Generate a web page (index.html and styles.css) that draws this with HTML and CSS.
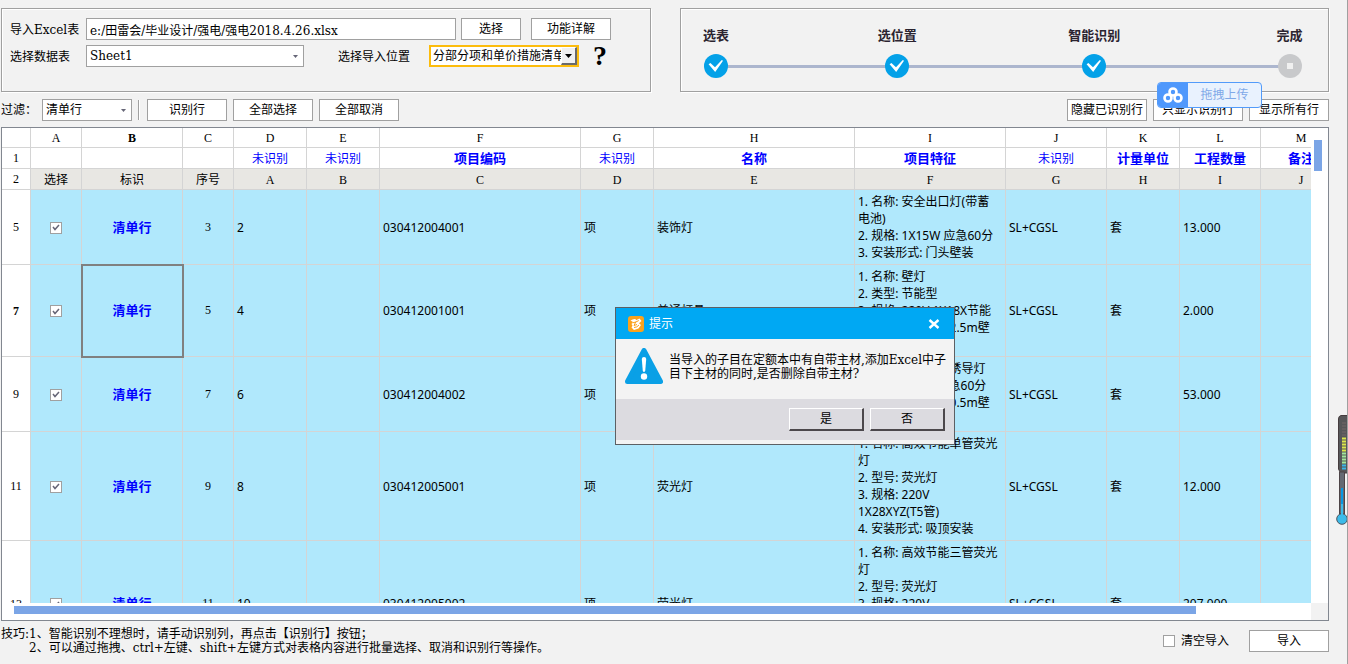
FILE: index.html
```html
<!DOCTYPE html>
<html lang="zh-CN">
<head>
<meta charset="utf-8">
<title>导入Excel表</title>
<link rel="stylesheet" href="styles.css">
</head>
<body>
<main class="window">
  <section class="top">
    <form class="panel source">
      <div class="line">
        <label class="lead" for="file">导入Excel表</label>
        <input class="field file" id="file" type="text" value="e:/田雷会/毕业设计/强电/强电2018.4.26.xlsx">
        <button class="btn small" type="button">选择</button>
        <button class="btn detail" type="button">功能详解</button>
      </div>
      <div class="line">
        <label class="lead" for="sheet">选择数据表</label>
        <select class="field drop sheet" id="sheet"><option>Sheet1</option></select>
        <label class="place-label" for="place">选择导入位置</label>
        <div class="place-box">
          <select class="place" id="place"><option>分部分项和单价措施清单</option></select>
          <span class="place-arrow"><svg width="7" height="4" viewBox="0 0 7 4"><path d="M0 0h7L3.5 4z"/></svg></span>
        </div>
        <button class="help" type="button">?</button>
      </div>
    </form>
    <div class="panel steps">
      <ol class="step-list">
        <li class="step"><span class="step-name">选表</span><svg class="dot" viewBox="0 0 24 24"><circle cx="12" cy="12" r="12" fill="#04a1e8"/><path d="M4.600 10.200L6.400 9l4.600 4.200 6.800-7.200 1.200.8L11.200 18z" fill="#fff"/></svg></li>
        <li class="step"><span class="step-name">选位置</span><svg class="dot" viewBox="0 0 24 24"><circle cx="12" cy="12" r="12" fill="#04a1e8"/><path d="M4.600 10.200L6.400 9l4.600 4.200 6.800-7.200 1.200.8L11.200 18z" fill="#fff"/></svg></li>
        <li class="step"><span class="step-name">智能识别</span><svg class="dot" viewBox="0 0 24 24"><circle cx="12" cy="12" r="12" fill="#04a1e8"/><path d="M4.600 10.200L6.400 9l4.600 4.200 6.800-7.200 1.200.8L11.200 18z" fill="#fff"/></svg></li>
        <li class="step"><span class="step-name">完成</span><svg class="dot" viewBox="0 0 24 24"><circle cx="12" cy="12" r="12" fill="#c8c9cb"/><path d="M9 9h6v6H9z" fill="#f0f0f0"/></svg></li>
      </ol>
    </div>
  </section>

  <section class="filters">
    <label class="filter-label" for="filter">过滤：</label>
    <select class="field drop filter" id="filter"><option>清单行</option></select>
    <span class="divider"></span>
    <button class="btn" type="button">识别行</button>
    <button class="btn" type="button">全部选择</button>
    <button class="btn" type="button">全部取消</button>
    <span class="spacer"></span>
    <button class="btn" type="button">隐藏已识别行</button>
    <button class="btn only" type="button">只显示识别行</button>
    <button class="btn" type="button">显示所有行</button>
    <button class="upload" type="button">
      <span class="upload-icon"><svg width="20" height="16" viewBox="0 0 20 16" fill="none" stroke="#fff" stroke-width="2.6"><circle cx="10" cy="5" r="3.5"/><circle cx="5" cy="11" r="3.5"/><circle cx="15" cy="11" r="3.5"/></svg></span>
      <span class="upload-text">拖拽上传</span>
    </button>
  </section>

  <section class="sheet-frame">
    <div class="sheet-view">
      <table class="grid">
        <colgroup><col class="w-head"><col class="w-check"><col class="w-mark"><col class="w-check"><col class="w-s"><col class="w-s"><col class="w-l"><col class="w-s"><col class="w-l"><col class="w-m"><col class="w-mark"><col class="w-s"><col class="w-n"><col class="w-n"></colgroup>
        <thead>
          <tr class="letters"><th></th><th>A</th><th class="current">B</th><th>C</th><th>D</th><th>E</th><th>F</th><th>G</th><th>H</th><th>I</th><th>J</th><th>K</th><th>L</th><th>M</th></tr>
          <tr class="fields"><th class="num">1</th><td></td><td></td><td></td><td>未识别</td><td>未识别</td><td class="known">项目编码</td><td>未识别</td><td class="known">名称</td><td class="known">项目特征</td><td>未识别</td><td class="known">计量单位</td><td class="known">工程数量</td><td class="known">备注</td></tr>
          <tr class="names"><th class="num">2</th><td>选择</td><td>标识</td><td>序号</td><td>A</td><td>B</td><td>C</td><td>D</td><td>E</td><td>F</td><td>G</td><td>H</td><td>I</td><td>J</td></tr>
        </thead>
        <tbody>
          <tr><th class="num">5</th><td class="mid"><input class="tick" type="checkbox" aria-label="选择第5行" checked></td><td class="mark">清单行</td><td class="mid">3</td><td>2</td><td></td><td>030412004001</td><td>项</td><td>装饰灯</td><td class="feature">1. 名称: 安全出口灯(带蓄<br>电池)<br>2. 规格: 1X15W 应急60分<br>3. 安装形式: 门头壁装</td><td>SL+CGSL</td><td>套</td><td>13.000</td><td></td></tr>
          <tr><th class="num current">7</th><td class="mid"><input class="tick" type="checkbox" aria-label="选择第7行" checked></td><td class="mark selected">清单行</td><td class="mid">5</td><td>4</td><td></td><td>030412001001</td><td>项</td><td>普通灯具</td><td class="feature">1. 名称: 壁灯<br>2. 类型: 节能型<br>3. 规格: 220V 1X18X节能<br>4. 安装形式: 距地2.5m壁<br>装</td><td>SL+CGSL</td><td>套</td><td>2.000</td><td></td></tr>
          <tr><th class="num">9</th><td class="mid"><input class="tick" type="checkbox" aria-label="选择第9行" checked></td><td class="mark">清单行</td><td class="mid">7</td><td>6</td><td></td><td>030412004002</td><td>项</td><td>装饰灯</td><td class="feature">1. 名称: 单向疏散诱导灯<br>2. 规格: 1X8W 应急60分<br>3. 安装形式: 距地0.5m壁<br>装</td><td>SL+CGSL</td><td>套</td><td>53.000</td><td></td></tr>
          <tr><th class="num">11</th><td class="mid"><input class="tick" type="checkbox" aria-label="选择第11行" checked></td><td class="mark">清单行</td><td class="mid">9</td><td>8</td><td></td><td>030412005001</td><td>项</td><td>荧光灯</td><td class="feature">1. 名称: 高效节能单管荧光<br>灯<br>2. 型号: 荧光灯<br>3. 规格: 220V<br>1X28XYZ(T5管)<br>4. 安装形式: 吸顶安装</td><td>SL+CGSL</td><td>套</td><td>12.000</td><td></td></tr>
          <tr><th class="num">13</th><td class="mid"><input class="tick" type="checkbox" aria-label="选择第13行" checked></td><td class="mark">清单行</td><td class="mid">11</td><td>10</td><td></td><td>030412005002</td><td>项</td><td>荧光灯</td><td class="feature">1. 名称: 高效节能三管荧光<br>灯<br>2. 型号: 荧光灯<br>3. 规格: 220V<br>3X28XYZ(T5管)<br>4. 安装形式: 吸顶安装<br>&nbsp;</td><td>SL+CGSL</td><td>套</td><td>207.000</td><td></td></tr>
        </tbody>
      </table>
    </div>
    <div class="vbar"><div class="vthumb"></div></div>
    <div class="hbar"><div class="hthumb"></div></div>
    <div class="corner"></div>
  </section>

  <footer class="foot">
    <div class="tips">
      <span>技巧:</span>
      <ol class="tip-list">
        <li>1、智能识别不理想时，请手动识别列，再点击【识别行】按钮；</li>
        <li>2、可以通过拖拽、ctrl+左键、shift+左键方式对表格内容进行批量选择、取消和识别行等操作。</li>
      </ol>
    </div>
    <label class="clear"><input class="box" type="checkbox">清空导入</label>
    <button class="btn" type="button">导入</button>
  </footer>

  <section class="dialog" role="dialog" aria-labelledby="dlg-title">
    <header class="dialog-head">
      <svg class="app-icon" viewBox="0 0 16 16"><rect width="16" height="16" rx="3" fill="#fba21c"/><path d="M2.500 4.500Q5 2.500 7.500 3L8 4.200 11.500 2.500 13.500 5 11 7.200 13 9 10.500 12.500 6 14 3.500 11.500 4.500 9.500 3.500 8 5 6z" fill="#fff"/><path d="M4.500 6.800Q8 6.500 10.800 4.500M6 11.500Q9 11.500 11 9M8 5.500L6 9.500 9 8.500" stroke="#fba21c" fill="none"/></svg>
      <h2 class="dialog-title" id="dlg-title">提示</h2>
      <button class="close" type="button" aria-label="关闭"><svg width="12" height="10" viewBox="0 0 12 10"><path d="M1.500 1l9 8M10.500 1l-9 8" stroke="#fff" stroke-width="2.400"/></svg></button>
    </header>
    <div class="dialog-body">
      <svg class="warn" viewBox="0 0 38 36"><path d="M19 2.500L35.500 33.500h-33z" fill="#0aa0e6" stroke="#0aa0e6" stroke-width="5" stroke-linejoin="round"/><path d="M16.800 11q0-2 2.200-2t2.200 2l-1 12q-1.200 2-2.400 0z" fill="#fff"/><circle cx="19" cy="28.500" r="3.200" fill="#fff"/></svg>
      <p class="message">当导入的子目在定额本中有自带主材,添加Excel中子目下主材的同时,是否删除自带主材?</p>
    </div>
    <div class="dialog-actions">
      <button class="choice" type="button">是</button>
      <button class="choice" type="button">否</button>
    </div>
  </section>

  <svg class="gauge" viewBox="0 0 12 110"><path d="M12 .5H5Q2.500 1 2.500 4v50l2 4H12z" fill="#575759" stroke="#453c3e"/><path d="M6 8h4M6 11h4M6 14h4M6 17h4M6 20h4" stroke="#756969"/><path d="M6 23.500h4M6 26.500h4M6 29.500h4M6 32.500h4M6 35.500h4" stroke="#dce84b" stroke-width="2"/><path d="M6 38.500h4M6 41.500h4M6 44.500h4M6 47.500h4" stroke="#a2e99c" stroke-width="2"/><path d="M6 50.500h4M6 53.500h4" stroke="#3bb6ea" stroke-width="2"/><path d="M3.500 57h5v42h-5z" fill="#656a73" stroke="#4d4447"/><circle cx="6" cy="104" r="5.300" fill="#3cbbe9" stroke="#4d5560"/><path d="M6 73v16" stroke="#0798e4" stroke-width="2"/><path d="M6 89v14" stroke="#3cbbe9" stroke-width="2"/></svg>
</main>
</body>
</html>
```
FILE: styles.css
```css
* { box-sizing: border-box; }

body {
  margin: 0;
  background: #f2f2f2;
  color: #000;
  font: 12px/14px "DejaVu Serif", "Noto Sans CJK SC", sans-serif;
}

button, input, select {
  margin: 0;
  font: inherit;
  color: inherit;
}

.window {
  position: relative;
  display: flex;
  flex-direction: column;
  height: 100vh;
  padding: 8px 18px 9px 1px;
  border-right: 1px solid #a0a0a0;
  overflow: hidden;
}

.top {
  display: grid;
  grid-template-columns: 1fr 1fr;
  gap: 29px;
}

.panel {
  border: 1px solid #a0a0a0;
  box-shadow: 1px 1px 0 #fff, inset 1px 1px 0 #fff;
  height: 84px;
}

.source {
  padding: 9px 8px;
  display: flex;
  flex-direction: column;
  gap: 5px;
}

.steps { padding: 17px 25px 17px 22px; }

.line {
  display: flex;
  align-items: center;
  height: 22px;
}

.line label {
  padding-top: 1px;
  white-space: nowrap;
}

.lead { width: 76px; }

.field {
  height: 22px;
  border: 1px solid #a0a0a0;
  border-radius: 0;
  background: #fff;
  padding: 0 3px;
}

.file { width: 370px; margin-right: 5px; }

.drop {
  appearance: none;
  background: #fff url("data:image/svg+xml,%3Csvg xmlns='http://www.w3.org/2000/svg' width='5' height='3'%3E%3Cpath d='M0 0h5L2.500 3z' fill='%23667'/%3E%3C/svg%3E") no-repeat right 5px center;
}

.sheet { width: 218px; }

.btn {
  width: 80px;
  height: 22px;
  padding: 0;
  border: 1px solid #a0a0a0;
  background: #fff;
  white-space: nowrap;
}

.small { width: 60px; margin-right: 10px; }

.place-label { margin-left: 34px; width: 91px; }

.place-box {
  display: flex;
  width: 150px;
  height: 22px;
  border: 2px solid #fcbc0c;
  background: #fff;
}

.place {
  appearance: none;
  flex: 1;
  min-width: 0;
  border: 0;
  padding: 0 0 0 2px;
  background: none;
}

.place-arrow {
  display: flex;
  align-items: center;
  justify-content: center;
  width: 16px;
  background: #f0f0f0;
  border: 1px solid #fff;
  border-right: 2px solid #6a6a6a;
  border-bottom: 2px solid #6a6a6a;
}

.help {
  margin-left: 14px;
  border: 0;
  padding: 0;
  background: none;
  font: bold 28px/22px "Liberation Serif", serif;
}

.step-list {
  display: grid;
  grid-template-columns: 181fr 197fr 195fr 27px;
  margin: 0;
  padding: 0;
  list-style: none;
  background: linear-gradient(#acb6ce, #acb6ce) no-repeat 14px 39px / calc(100% - 28px) 3px;
}

.step {
  display: flex;
  flex-direction: column;
  align-items: center;
  gap: 9px;
  width: 27px;
  white-space: nowrap;
}

.step-name {
  font-size: 13px;
  line-height: 19px;
  font-weight: bold;
  color: #2b2430;
}

.dot { width: 24px; height: 24px; }

.filters {
  position: relative;
  display: flex;
  align-items: center;
  gap: 6px;
  margin: 7px 0 6px;
}

.filter-label { width: 35px; white-space: nowrap; }
.filter { width: 90px; }

.divider {
  width: 2px;
  height: 20px;
  margin-right: 1px;
  border-left: 1px solid #a0a0a0;
  background: #fff;
}

.spacer { flex: 1; }
.only { width: 90px; }

.upload {
  position: absolute;
  right: 67px;
  bottom: 13px;
  display: flex;
  width: 105px;
  height: 26px;
  padding: 0;
  border: 1px solid #529bfa;
  border-radius: 4px;
  background: #e9f2fe;
  overflow: hidden;
}

.upload-icon {
  display: flex;
  align-items: center;
  justify-content: center;
  width: 30px;
  height: 24px;
  background: #4f98fc;
}

.upload-text {
  flex: 1;
  line-height: 24px;
  color: #7fa9e8;
}

.sheet-frame {
  flex: 1;
  min-height: 0;
  display: grid;
  grid-template: minmax(0, 1fr) 17px / minmax(0, 1fr) 17px;
  border: 1px solid #828790;
  background: #fff;
}

.sheet-view { overflow: hidden; }

.grid {
  width: 1340px;
  table-layout: fixed;
  border-collapse: separate;
  border-spacing: 0;
}

.w-head { width: 29px; }
.w-check { width: 51px; }
.w-mark { width: 101px; }
.w-s { width: 73px; }
.w-m { width: 151px; }
.w-l { width: 201px; }
.w-n { width: 81px; }

.grid th, .grid td {
  padding: 0 3px;
  border-right: 1px solid #d4d4d4;
  border-bottom: 1px solid #d4d4d4;
}

.grid th {
  font: 12px/14px "Liberation Serif", serif;
}

.grid .current { font-weight: bold; }
.letters { height: 20px; }
.fields, .names { height: 21px; }

.grid thead td {
  padding-top: 2px;
  text-align: center;
}

.fields td { color: #00f; }
.grid .known { font-weight: bold; font-size: 13px; }

.names td {
  background: #e8e7e3;
  font-family: "Liberation Serif", "Noto Sans CJK SC", serif;
}

tbody td {
  background: #b0e8fc;
  font: 12px/17px "Noto Sans", "Noto Sans CJK SC", sans-serif;
  white-space: nowrap;
}

.grid .feature { padding: 3px; vertical-align: top; }

.grid .mid {
  text-align: center;
  font-family: "Liberation Serif", serif;
}

.grid .mark {
  text-align: center;
  font-weight: bold;
  font-size: 13px;
  color: #00f;
}

.grid .selected {
  position: relative;
  outline: 2px solid #808080;
  outline-offset: -1px;
}

.tick, .box {
  appearance: none;
  display: inline-block;
  width: 12px;
  height: 12px;
  border: 1px solid #a0a0a0;
  background: #fff;
  vertical-align: middle;
}

.tick:checked {
  background: #fff url("data:image/svg+xml,%3Csvg xmlns='http://www.w3.org/2000/svg' width='8' height='7'%3E%3Cpath d='M1 3l2 2.500L7 1' fill='none' stroke='%23667' stroke-width='1.500'/%3E%3C/svg%3E") no-repeat center;
}

.vbar { padding: 12px 3px; }
.vthumb { height: 31px; width: 8px; background: #7ba5e6; }
.hbar { padding: 3px 12px; }
.hthumb { width: 92%; height: 8px; background: #7ba5e6; }
.corner { background: #f2f2f2; }

.foot {
  display: flex;
  align-items: center;
  margin-top: 6px;
}

.tips { display: flex; flex: 1; }
.tip-list { margin: 0; padding: 0; list-style: none; }

.clear {
  display: flex;
  align-items: center;
  gap: 6px;
  margin-right: 20px;
}

.dialog {
  position: absolute;
  left: 615px;
  top: 307px;
  width: 340px;
  border: 1px solid #5c6064;
  background: #f3f3f3;
  padding-bottom: 4px;
}

.dialog-head {
  display: flex;
  align-items: center;
  height: 31px;
  padding: 0 14px 0 12px;
  background: #00a8f3;
  color: #fff;
}

.app-icon { width: 16px; height: 16px; margin-right: 5px; }

.dialog-title {
  flex: 1;
  margin: 0;
  font-size: 12px;
  font-weight: normal;
}

.close {
  display: flex;
  padding: 0;
  border: 0;
  background: none;
}

.dialog-body {
  display: flex;
  gap: 6px;
  height: 60px;
  padding: 9px 4px 0 9px;
}

.warn { flex: none; width: 38px; height: 36px; }

.message { margin: 5px 0 0; }

.dialog-actions {
  display: flex;
  justify-content: flex-end;
  gap: 6px;
  height: 41px;
  padding: 9px;
  background: #dcdbe0;
}

.choice {
  width: 75px;
  height: 23px;
  padding: 0;
  border: 1px solid #fff;
  border-right: 2px solid #4c484c;
  border-bottom: 2px solid #4c484c;
  background: #dcdbe0;
}

.gauge {
  position: absolute;
  right: -1px;
  top: 415px;
  width: 12px;
  height: 110px;
}
```
